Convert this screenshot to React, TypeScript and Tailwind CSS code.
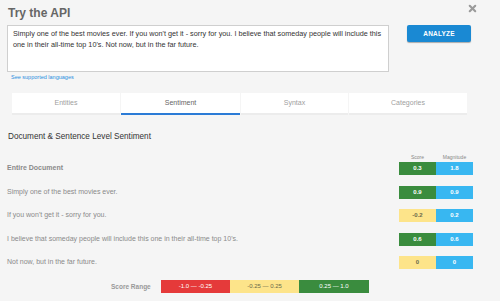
import { X } from 'lucide-react';

const rows = [
  { label: 'Entire Document', bold: true, score: '0.3', magnitude: '1.8', tone: 'pos' },
  { label: 'Simply one of the best movies ever.', score: '0.9', magnitude: '0.9', tone: 'pos' },
  { label: "If you won't get it - sorry for you.", score: '-0.2', magnitude: '0.2', tone: 'neu' },
  { label: "I believe that someday people will include this one in their all-time top 10's.", score: '0.6', magnitude: '0.6', tone: 'pos' },
  { label: 'Not now, but in the far future.', score: '0', magnitude: '0', tone: 'neu' },
];

const tabs = [
  { name: 'Entities', w: 'w-[108px]' },
  { name: 'Sentiment', w: 'w-[119px]', active: true },
  { name: 'Syntax', w: 'w-[107px]' },
  { name: 'Categories', w: 'w-[118px]' },
];

export default function App() {
  return (
    <div className="relative w-[500px] h-[301px] overflow-hidden bg-[#f5f5f5] font-['Liberation_Sans',Arial,sans-serif]">
      {/* close */}
      <button className="absolute top-[3px] right-[22px] text-[#9a9a9a]">
        <X size={11} strokeWidth={4.5} />
      </button>

      <h1 className="pl-[8px] pt-[6px] text-[12px] leading-[14px] font-bold text-[#666]">Try the API</h1>

      <div className="flex items-start pl-[7px] mt-[5px]">
        <div className="w-[382px] h-[47px] overflow-hidden bg-white border border-[#cfcfcf] px-[5px] pt-[2px] text-[7.25px] leading-[11px] text-[#333] whitespace-nowrap">
          Simply one of the best movies ever. If you won't get it - sorry for you. I believe that someday people will include this
          <br />
          one in their all-time top 10's. Not now, but in the far future.
        </div>
        <button className="ml-[18px] w-[64px] h-[17px] bg-[#1a89d3] rounded-[2px] shadow-[0_1px_1px_rgba(0,0,0,0.3)] text-white text-[6.5px] font-bold tracking-[0.2px]">
          ANALYZE
        </button>
      </div>

      <div className="pl-[11px] mt-[1px] text-[5.5px] leading-[8px] text-[#2a8ee0]">See supported languages</div>

      <div className="flex gap-[1px] pl-[12px] mt-[12px]">
        {tabs.map((t) => (
          <div
            key={t.name}
            className={`${t.w} h-[22px] bg-white flex items-center justify-center text-[7px] border-b-2 ${
              t.active ? 'border-[#2b7bd6] text-[#666]' : 'border-[#ececec] text-[#a0a0a0]'
            }`}
          >
            {t.name}
          </div>
        ))}
      </div>

      <h2 className="pl-[8px] mt-[16px] text-[8.2px] leading-[11px] text-[#333]">Document &amp; Sentence Level Sentiment</h2>

      <div className="pl-[7px] pr-[27px] mt-[12px]">
        <div className="flex justify-end text-[5px] leading-[7px] text-[#888]">
          <span className="w-[37px] text-center">Score</span>
          <span className="w-[37px] text-center">Magnitude</span>
        </div>
        <div className="flex flex-col gap-[10.5px] mt-[1px]">
          {rows.map((r) => (
            <div key={r.label} className="flex items-center justify-between">
              <span className={`text-[7px] text-[#8a8a8a] ${r.bold ? 'font-bold' : ''}`}>{r.label}</span>
              <div className="flex h-[13px] text-[6px] font-bold">
                <span
                  className={`w-[37px] flex items-center justify-center ${
                    r.tone === 'pos' ? 'bg-[#3a8c3e] text-white' : 'bg-[#fde48a] text-[#6b6b4a]'
                  }`}
                >
                  {r.score}
                </span>
                <span className="w-[37px] flex items-center justify-center bg-[#38b7f1] text-white">{r.magnitude}</span>
              </div>
            </div>
          ))}
        </div>
      </div>

      <div className="flex items-center pl-[111px] mt-[11px]">
        <span className="w-[50px] text-[6.5px] font-bold text-[#999]">Score Range</span>
        <div className="flex h-[13px] text-[6px]">
          <span className="w-[69px] bg-[#e53a3a] text-white flex items-center justify-center">-1.0 — -0.25</span>
          <span className="w-[69px] bg-[#fde48a] text-[#6b6b4a] flex items-center justify-center">-0.25 — 0.25</span>
          <span className="w-[70px] bg-[#3a8c3e] text-white flex items-center justify-center">0.25 — 1.0</span>
        </div>
      </div>
    </div>
  );
}
